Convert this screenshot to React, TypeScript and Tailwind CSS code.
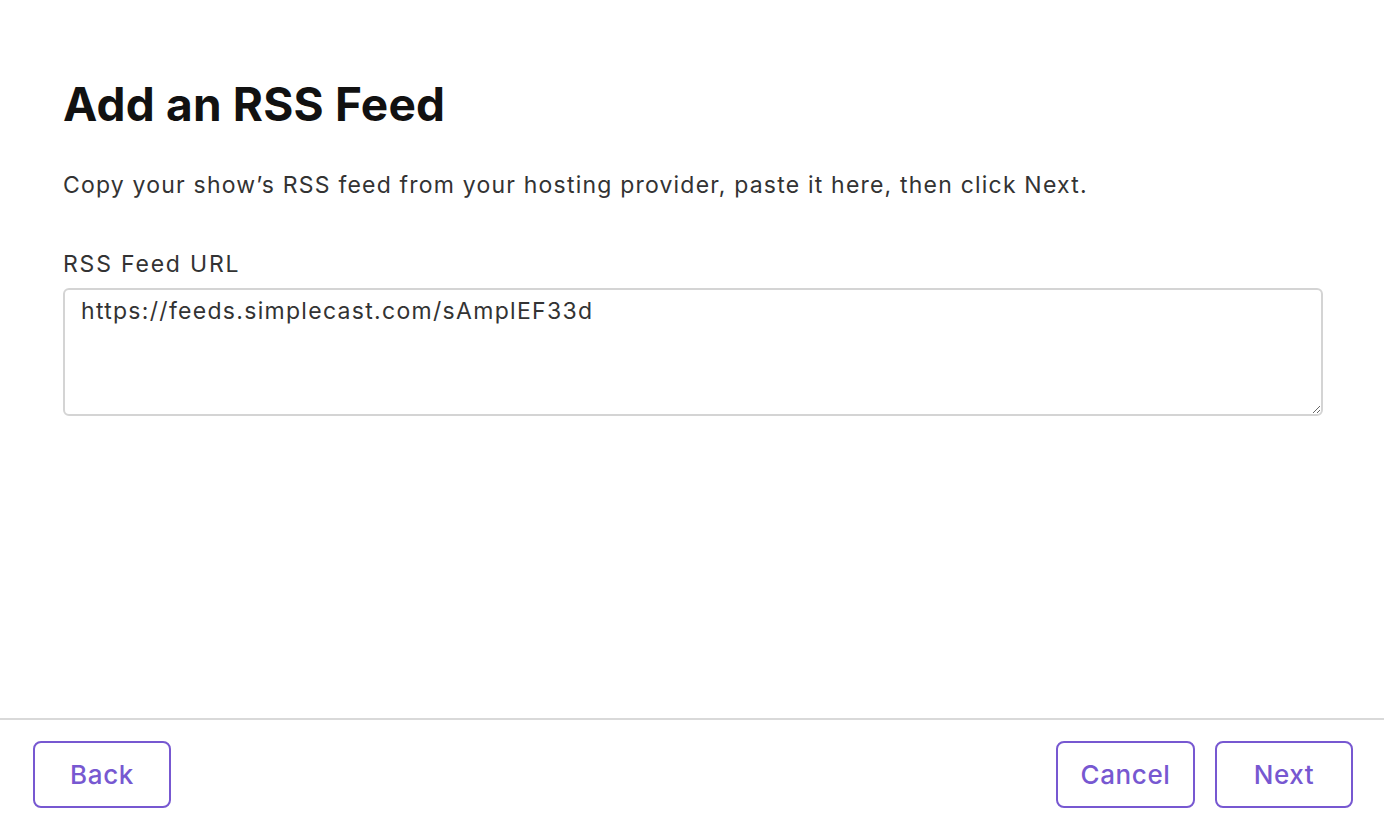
import { useState } from "react";

export default function App() {
  const [url, setUrl] = useState("https://feeds.simplecast.com/sAmplEF33d");

  return (
    <div className="flex h-[820px] w-full flex-col bg-white font-['Inter',sans-serif]">
      {/* Content */}
      <div className="flex-1 pl-[63px] pr-[61px] pt-[76px]">
        <h1 className="text-[46px] font-bold leading-[56px] tracking-[0.2px] text-[#111111]">
          Add an RSS Feed
        </h1>
        <p className="mt-[38px] text-[23px] leading-[30px] tracking-[1.2px] text-[#333333]">
          Copy your show’s RSS feed from your hosting provider, paste it here, then click Next.
        </p>

        <label className="mt-[49px] block text-[23px] leading-[30px] tracking-[1.8px] text-[#333333]">
          RSS Feed URL
        </label>
        <textarea
          value={url}
          onChange={(e) => setUrl(e.target.value)}
          className="mt-[9px] block h-[128px] w-full resize-y rounded-[6px] border-2 border-[#d4d4d4] px-[16px] pt-[5px] text-[23px] leading-[32px] tracking-[1.3px] text-[#333333] outline-none"
        />
      </div>

      {/* Footer */}
      <div className="flex items-start justify-between border-t-2 border-[#d9d9d9] pl-[33px] pr-[31px] pt-[21px] pb-[12px]">
        <button className="h-[67px] w-[138px] rounded-[8px] border-2 border-[#7758d1] text-[26px] font-medium tracking-[0.6px] text-[#7758d1]">
          Back
        </button>
        <div className="flex gap-[20px]">
          <button className="h-[67px] w-[139px] rounded-[8px] border-2 border-[#7758d1] text-[26px] font-medium tracking-[0.6px] text-[#7758d1]">
            Cancel
          </button>
          <button className="h-[67px] w-[138px] rounded-[8px] border-2 border-[#7758d1] text-[26px] font-medium tracking-[0.6px] text-[#7758d1]">
            Next
          </button>
        </div>
      </div>
    </div>
  );
}
